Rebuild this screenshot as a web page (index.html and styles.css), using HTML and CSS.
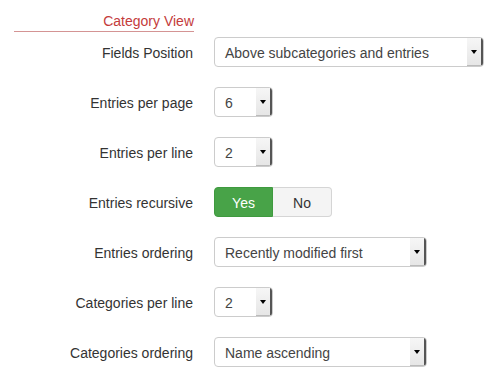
FILE: index.html
```html
<!DOCTYPE html>
<html>
<head>
<meta charset="utf-8">
<link rel="stylesheet" href="styles.css">
</head>
<body>
<div class="panel">
  <div class="legend">Category View</div>
  <div class="form">
    <div class="row">
      <label class="lbl">Fields Position</label>
      <div class="select w-xl"><span class="val">Above subcategories and entries</span><span class="arrow"></span></div>
    </div>
    <div class="row">
      <label class="lbl">Entries per page</label>
      <div class="select w-s"><span class="val">6</span><span class="arrow"></span></div>
    </div>
    <div class="row">
      <label class="lbl">Entries per line</label>
      <div class="select w-s"><span class="val">2</span><span class="arrow"></span></div>
    </div>
    <div class="row">
      <label class="lbl">Entries recursive</label>
      <div class="toggle"><span class="btn yes">Yes</span><span class="btn no">No</span></div>
    </div>
    <div class="row">
      <label class="lbl">Entries ordering</label>
      <div class="select w-l"><span class="val">Recently modified first</span><span class="arrow"></span></div>
    </div>
    <div class="row">
      <label class="lbl">Categories per line</label>
      <div class="select w-s"><span class="val">2</span><span class="arrow"></span></div>
    </div>
    <div class="row">
      <label class="lbl">Categories ordering</label>
      <div class="select w-l"><span class="val">Name ascending</span><span class="arrow"></span></div>
    </div>
  </div>
</div>
</body>
</html>
```
FILE: styles.css
```css
html, body {
  margin: 0;
  padding: 0;
  background: #fff;
}
body {
  font-family: "Liberation Sans", Arial, sans-serif;
  font-size: 14px;
  color: #333;
}
.panel {
  padding-top: 12px;
}
.legend {
  margin-left: 14px;
  width: 180px;
  text-align: right;
  color: #c43b3b;
  font-size: 14px;
  line-height: 18px;
  border-bottom: 1px solid #d49494;
  padding-bottom: 1px;
  box-sizing: border-box;
  height: 20px;
}
.form {
  display: flex;
  flex-direction: column;
  gap: 20px;
  padding-top: 5px;
}
.row {
  display: flex;
  align-items: center;
  height: 30px;
}
.lbl {
  width: 214px;
  text-align: right;
  padding-right: 21px;
  padding-top: 2px;
  box-sizing: border-box;
  color: #333;
}
.select {
  display: flex;
  align-items: stretch;
  height: 30px;
  box-sizing: border-box;
  border: 1px solid #ccc;
  border-radius: 4px;
  background: #fff;
  overflow: hidden;
}
.w-xl { width: 270px; }
.w-l { width: 213px; }
.w-s { width: 59px; }
.val {
  flex: 1;
  display: flex;
  align-items: center;
  padding-left: 10px;
  padding-top: 2px;
  color: #444;
  white-space: nowrap;
}
.arrow {
  width: 14px;
  margin: 0;
  background: linear-gradient(#f6f6f6, #e6e6e6);
  border-right: 2px solid #555;
  border-bottom: 1px solid #bbb;
  position: relative;
}
.arrow::after {
  content: "";
  position: absolute;
  left: 4px;
  top: 12px;
  border-left: 3px solid transparent;
  border-right: 3px solid transparent;
  border-top: 4px solid #000;
}
.toggle {
  display: flex;
  height: 30px;
}
.btn {
  display: flex;
  align-items: center;
  justify-content: center;
  width: 59px;
  box-sizing: border-box;
  font-size: 14px;
  padding-top: 2px;
}
.yes {
  background: #48a348;
  color: #fff;
  border: 1px solid #3f9a3f;
  border-radius: 4px 0 0 4px;
}
.no {
  background: #f4f4f4;
  color: #333;
  border: 1px solid #d5d5d5;
  border-left: none;
  border-radius: 0 4px 4px 0;
}
```
